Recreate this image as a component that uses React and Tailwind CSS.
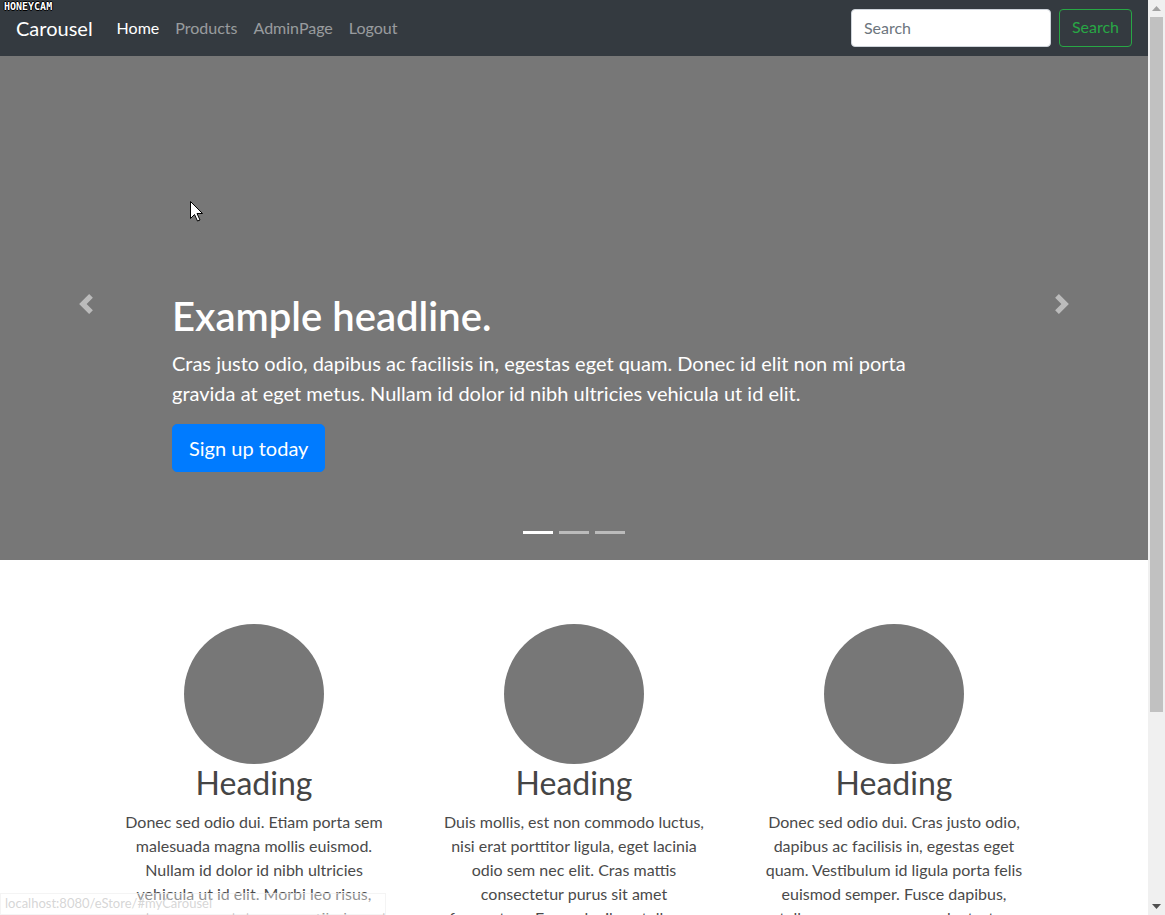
import React from 'react';

const FONT = { fontFamily: 'Lato, "Noto Sans", "Liberation Sans", sans-serif' };

const columns = [
    [
        'Donec sed odio dui. Etiam porta sem',
        'malesuada magna mollis euismod.',
        'Nullam id dolor id nibh ultricies',
        'vehicula ut id elit. Morbi leo risus,',
        'porta ac consectetur ac, vestibulum at',
        'eros. Praesent commodo cursus magna.',
    ],
    [
        'Duis mollis, est non commodo luctus,',
        'nisi erat porttitor ligula, eget lacinia',
        'odio sem nec elit. Cras mattis',
        'consectetur purus sit amet',
        'fermentum. Fusce dapibus, tellus ac',
        'cursus commodo, tortor mauris.',
    ],
    [
        'Donec sed odio dui. Cras justo odio,',
        'dapibus ac facilisis in, egestas eget',
        'quam. Vestibulum id ligula porta felis',
        'euismod semper. Fusce dapibus,',
        'tellus ac cursus commodo, tortor mauris',
        'condimentum nibh, ut fermentum.',
    ],
];

// bootstrap carousel chevrons
function Chevron({ dir }) {
    const d = dir === 'prev'
        ? 'M5.25 0l-4 4 4 4 1.5-1.5-2.5-2.5 2.5-2.5-1.5-1.5z'
        : 'M2.75 0l-1.5 1.5 2.5 2.5-2.5 2.5 1.5 1.5 4-4-4-4z';
    return (
        <svg width="20" height="20" viewBox="0 0 8 8" className="opacity-50">
            <path d={d} fill="#fff" />
        </svg>
    );
}

function Navbar() {
    return (
        <nav className="h-14 shrink-0 bg-[#343a40] flex items-center px-4">
            <span className="text-xl leading-[30px] text-white mr-4">Carousel</span>
            <ul className="flex">
                <li className="px-2 text-white">Home</li>
                <li className="px-2 text-white/50">Products</li>
                <li className="px-2 text-white/50">AdminPage</li>
                <li className="px-2 text-white/50">Logout</li>
            </ul>
            <div className="ml-auto flex items-center">
                <input
                    placeholder="Search"
                    className="w-[200px] h-[38px] px-3 pb-[2px] bg-white rounded border border-[#ced4da] text-base text-[#495057] placeholder:text-[#6c757d] outline-none mr-2"
                    style={FONT}
                />
                <button className="h-[38px] px-3 pb-[2px] rounded border border-[#28a745] text-[#28a745]">
                    Search
                </button>
            </div>
        </nav>
    );
}

function Carousel() {
    return (
        <div className="relative h-[504px] shrink-0 bg-[#777] flex flex-col justify-end pl-[172px] pr-[172px] pb-[88px]">
            <h1 className="text-[40px] leading-[48px] font-semibold text-white mb-2">Example headline.</h1>
            <p className="text-xl leading-[30px] text-white mb-4">
                Cras justo odio, dapibus ac facilisis in, egestas eget quam. Donec id elit non mi porta<br />
                gravida at eget metus. Nullam id dolor id nibh ultricies vehicula ut id elit.
            </p>
            <div>
                <button className="text-xl leading-[30px] text-white bg-[#007bff] border border-[#007bff] rounded-[5px] px-4 py-2">
                    Sign up today
                </button>
            </div>

            {/* controls */}
            <div className="absolute left-0 top-0 h-[496px] w-[172px] flex items-center justify-center">
                <Chevron dir="prev" />
            </div>
            <div className="absolute right-0 top-0 h-[496px] w-[172px] flex items-center justify-center">
                <Chevron dir="next" />
            </div>

            {/* indicators */}
            <div className="absolute inset-x-0 bottom-[26px] flex justify-center">
                <span className="w-[30px] h-[3px] mx-[3px] bg-white" />
                <span className="w-[30px] h-[3px] mx-[3px] bg-white/50" />
                <span className="w-[30px] h-[3px] mx-[3px] bg-white/50" />
            </div>
        </div>
    );
}

function Marketing() {
    return (
        <div className="w-[960px] mx-auto pt-16 grid grid-cols-3">
            {columns.map((lines, i) => (
                <div key={i} className="px-[15px] text-center">
                    <div className="w-[140px] h-[140px] rounded-full bg-[#777] mx-auto" />
                    <h2 className="text-[32px] leading-[38px] text-[#454545] mb-2">Heading</h2>
                    <p className="mx-3 text-base leading-6 text-[#4a4a4a]">
                        {lines.map((l, j) => (
                            <span key={j} className="block">{l}</span>
                        ))}
                    </p>
                </div>
            ))}
        </div>
    );
}

function Scrollbar() {
    return (
        <div className="w-[17px] shrink-0 bg-[#f0f0f0] flex flex-col items-center">
            <div className="h-[17px] flex items-center justify-center">
                <svg width="9" height="5" viewBox="0 0 9 5"><path d="M0 5L4.5 0L9 5z" fill="#a3a3a3" /></svg>
            </div>
            <div className="w-[13px] h-[695px] bg-[#c1c1c1]" />
            <div className="mt-auto h-[17px] flex items-center justify-center">
                <svg width="9" height="5" viewBox="0 0 9 5"><path d="M0 0L9 0L4.5 5z" fill="#505050" /></svg>
            </div>
        </div>
    );
}

export default function App() {
    return (
        <div className="relative w-[1165px] h-[915px] overflow-hidden flex bg-white" style={FONT}>
            <div className="w-[1148px] shrink-0 flex flex-col">
                <Navbar />
                <Carousel />
                <Marketing />
            </div>
            <Scrollbar />

            {/* recorder watermark */}
            <span
                className="absolute top-[1px] left-[4px] text-[10px] leading-[12px] font-bold text-white"
                style={{ fontFamily: '"DejaVu Sans Mono", monospace', textShadow: '1px 0 #000, -1px 0 #000, 0 1px #000, 0 -1px #000' }}
            >
                HONEYCAM
            </span>

            {/* mouse cursor */}
            <svg className="absolute left-[190px] top-[201px]" width="13" height="21" viewBox="0 0 13 21">
                <path d="M0.5 0.5V17.5L4.5 13.5L7.5 20L10 19L7 12.5H12.5Z" fill="#fff" stroke="#000" strokeWidth="1" />
            </svg>

            {/* browser status bar, fading out */}
            <div className="absolute left-0 bottom-0 w-[386px] h-[22px] bg-white/40 border border-[#ececec]/60 flex items-center px-1 text-[13px] text-[#c4c4c4]/70">
                localhost:8080/eStore/#myCarousel
            </div>
        </div>
    );
}
